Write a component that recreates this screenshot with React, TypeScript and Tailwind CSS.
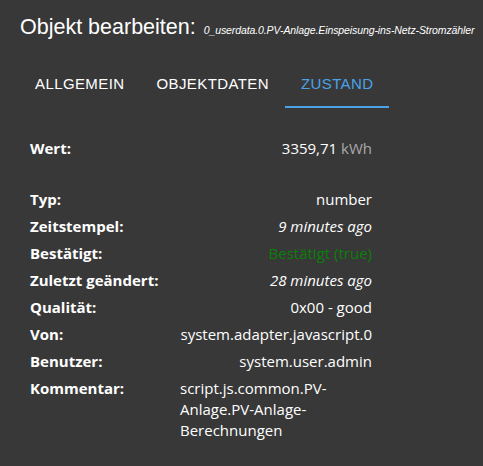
import React, { useState } from "react";

const rows: { label: string; value: React.ReactNode; align?: "left" | "right" }[] = [
    { label: "Typ:", value: "number" },
    { label: "Zeitstempel:", value: <i>9 minutes ago</i> },
    { label: "Bestätigt:", value: <span className="text-[#0a800a]">Bestätigt (true)</span> },
    { label: "Zuletzt geändert:", value: <i>28 minutes ago</i> },
    { label: "Qualität:", value: "0x00 - good" },
    { label: "Von:", value: "system.adapter.javascript.0" },
    { label: "Benutzer:", value: "system.user.admin" },
    { label: "Kommentar:", value: "script.js.common.PV-Anlage.PV-Anlage-Berechnungen", align: "left" },
];

const tabs = ["Allgemein", "Objektdaten", "Zustand"];

const App = () => {
    const [tab, setTab] = useState(2);

    return (
        <div className="min-h-screen bg-[#383838] text-white">
            <div className="flex items-baseline gap-[8px] whitespace-nowrap px-5 pt-[15px] font-['Liberation_Sans',Arial,sans-serif]">
                <h2 className="shrink-0 text-[21.5px] leading-[24px]">Objekt bearbeiten:</h2>
                <span className="shrink-0 text-[10.5px] italic tracking-[-0.1px]">0_userdata.0.PV-Anlage.Einspeisung-ins-Netz-Stromzähler</span>
            </div>

            <div className="mt-[21px] flex pl-[19px] font-['Liberation_Sans',Arial,sans-serif]">
                {tabs.map((t, i) => (
                    <button
                        key={t}
                        onClick={() => setTab(i)}
                        className={
                            i === tab
                                ? "h-[48px] border-b-2 border-[#4aa3e8] px-4 pt-[2px] text-[15px] uppercase tracking-[0.4px] text-[#4aa3e8]"
                                : "h-[48px] border-b-2 border-transparent px-4 pt-[2px] text-[15px] uppercase tracking-[0.4px] text-white"
                        }
                    >
                        {t}
                    </button>
                ))}
            </div>

            <table className="ml-[30px] mt-[27px] w-[342px] border-collapse font-['Open_Sans',sans-serif] text-[15px] leading-[21px]">
                <tbody>
                    <tr>
                        <td className="w-[150px] py-[3px] align-top font-bold">Wert:</td>
                        <td className="py-[3px] text-right align-top">
                            3359,71 <span className="text-[#a8a8a8]">kWh</span>
                        </td>
                    </tr>
                    <tr>
                        <td colSpan={2} className="h-[24px]"></td>
                    </tr>
                    {rows.map((r) => (
                        <tr key={r.label}>
                            <td className="w-[150px] py-[3px] align-top font-bold">{r.label}</td>
                            <td className={r.align === "left" ? "py-[3px] text-left align-top" : "py-[3px] text-right align-top"}>
                                {r.value}
                            </td>
                        </tr>
                    ))}
                </tbody>
            </table>
        </div>
    );
};

export default App;
